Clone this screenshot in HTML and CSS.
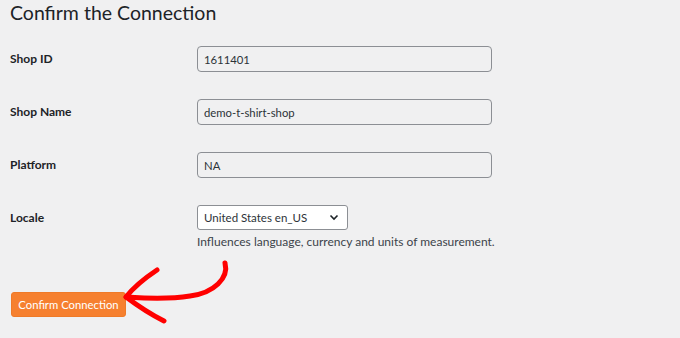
FILE: index.html
```html
<!DOCTYPE html>
<html lang="en">
<head>
    <meta charset="UTF-8">
    <title>Confirm the Connection</title>
    <link rel="stylesheet" href="styles.css">
</head>
<body>

<div class="wrap">
    <h1>Confirm the Connection</h1>

    <!-- Connection details -->
    <div class="form-table">
        <label class="field-label">Shop ID</label>
        <div class="field"><input type="text" value="1611401" readonly></div>

        <label class="field-label">Shop Name</label>
        <div class="field"><input type="text" value="demo-t-shirt-shop" readonly></div>

        <label class="field-label">Platform</label>
        <div class="field"><input type="text" value="NA" readonly></div>

        <label class="field-label">Locale</label>
        <div class="field">
            <div class="select-box">
                <span>United States en_US</span>
                <svg class="chevron" width="10" height="7" viewBox="0 0 10 7"><path d="M1.5 1.5 L5 5 L8.5 1.5" fill="none" stroke="#1d2327" stroke-width="1.6"/></svg>
            </div>
            <p class="description">Influences language, currency and units of measurement.</p>
        </div>
    </div>

    <div class="submit">
        <button class="confirm-btn">Confirm Connection</button>
    </div>

    <!-- hand drawn arrow pointing at the button -->
    <svg class="arrow" width="680" height="338" viewBox="0 0 680 338">
        <g fill="none" stroke="#ff0000" stroke-width="5" stroke-linecap="round" stroke-linejoin="round">
            <path d="M225 263 C 229 278, 214 293, 190 296 C 165 300, 142 298, 126 297"/>
            <path d="M157 270 C 145 278, 133 288, 126 297 C 138 306, 152 315, 164 321"/>
        </g>
    </svg>
</div>

</body>
</html>
```
FILE: styles.css
```css
* {
    margin: 0;
    padding: 0;
    box-sizing: border-box;
}

body {
    font-family: Lato, 'Open Sans', sans-serif;
    background-color: #f0f0f1;
    color: #1d2327;
}

.wrap {
    position: relative;
    padding: 0 10px;
    height: 338px;
}

h1 {
    font-size: 19.5px;
    font-weight: 400;
    line-height: 26px;
    color: #1d2327;
}

/* Form rows */
.form-table {
    display: grid;
    grid-template-columns: 187px 295px;
    row-gap: 27px;
    margin-top: 20px;
}

.field-label {
    font-size: 12px;
    font-weight: 700;
    line-height: 26px;
}

.field input {
    width: 295px;
    height: 26px;
    padding: 0 6px;
    font-family: inherit;
    font-size: 11.3px;
    color: #2c3338;
    background-color: #f0f0f1;
    border: 1px solid #8c8f94;
    border-radius: 4px;
    outline: none;
}

.select-box {
    width: 151px;
    height: 25px;
    padding: 0 8px 0 6px;
    display: flex;
    align-items: center;
    justify-content: space-between;
    font-size: 11.5px;
    color: #2c3338;
    background-color: #fff;
    border: 1px solid #8c8f94;
    border-radius: 3px;
}

.description {
    font-size: 12px;
    color: #3c434a;
    margin-top: 4px;
    white-space: nowrap;
}

.submit {
    margin-top: 43px;
    padding-left: 1px;
}

.confirm-btn {
    font-family: inherit;
    font-size: 11.3px;
    color: #fff;
    white-space: nowrap;
    background-color: #f6802f;
    border: 1px solid #ef7a28;
    border-radius: 3px;
    width: 115px;
    height: 25px;
    cursor: pointer;
}

.arrow {
    position: absolute;
    left: 0;
    top: 0;
    pointer-events: none;
}
```
